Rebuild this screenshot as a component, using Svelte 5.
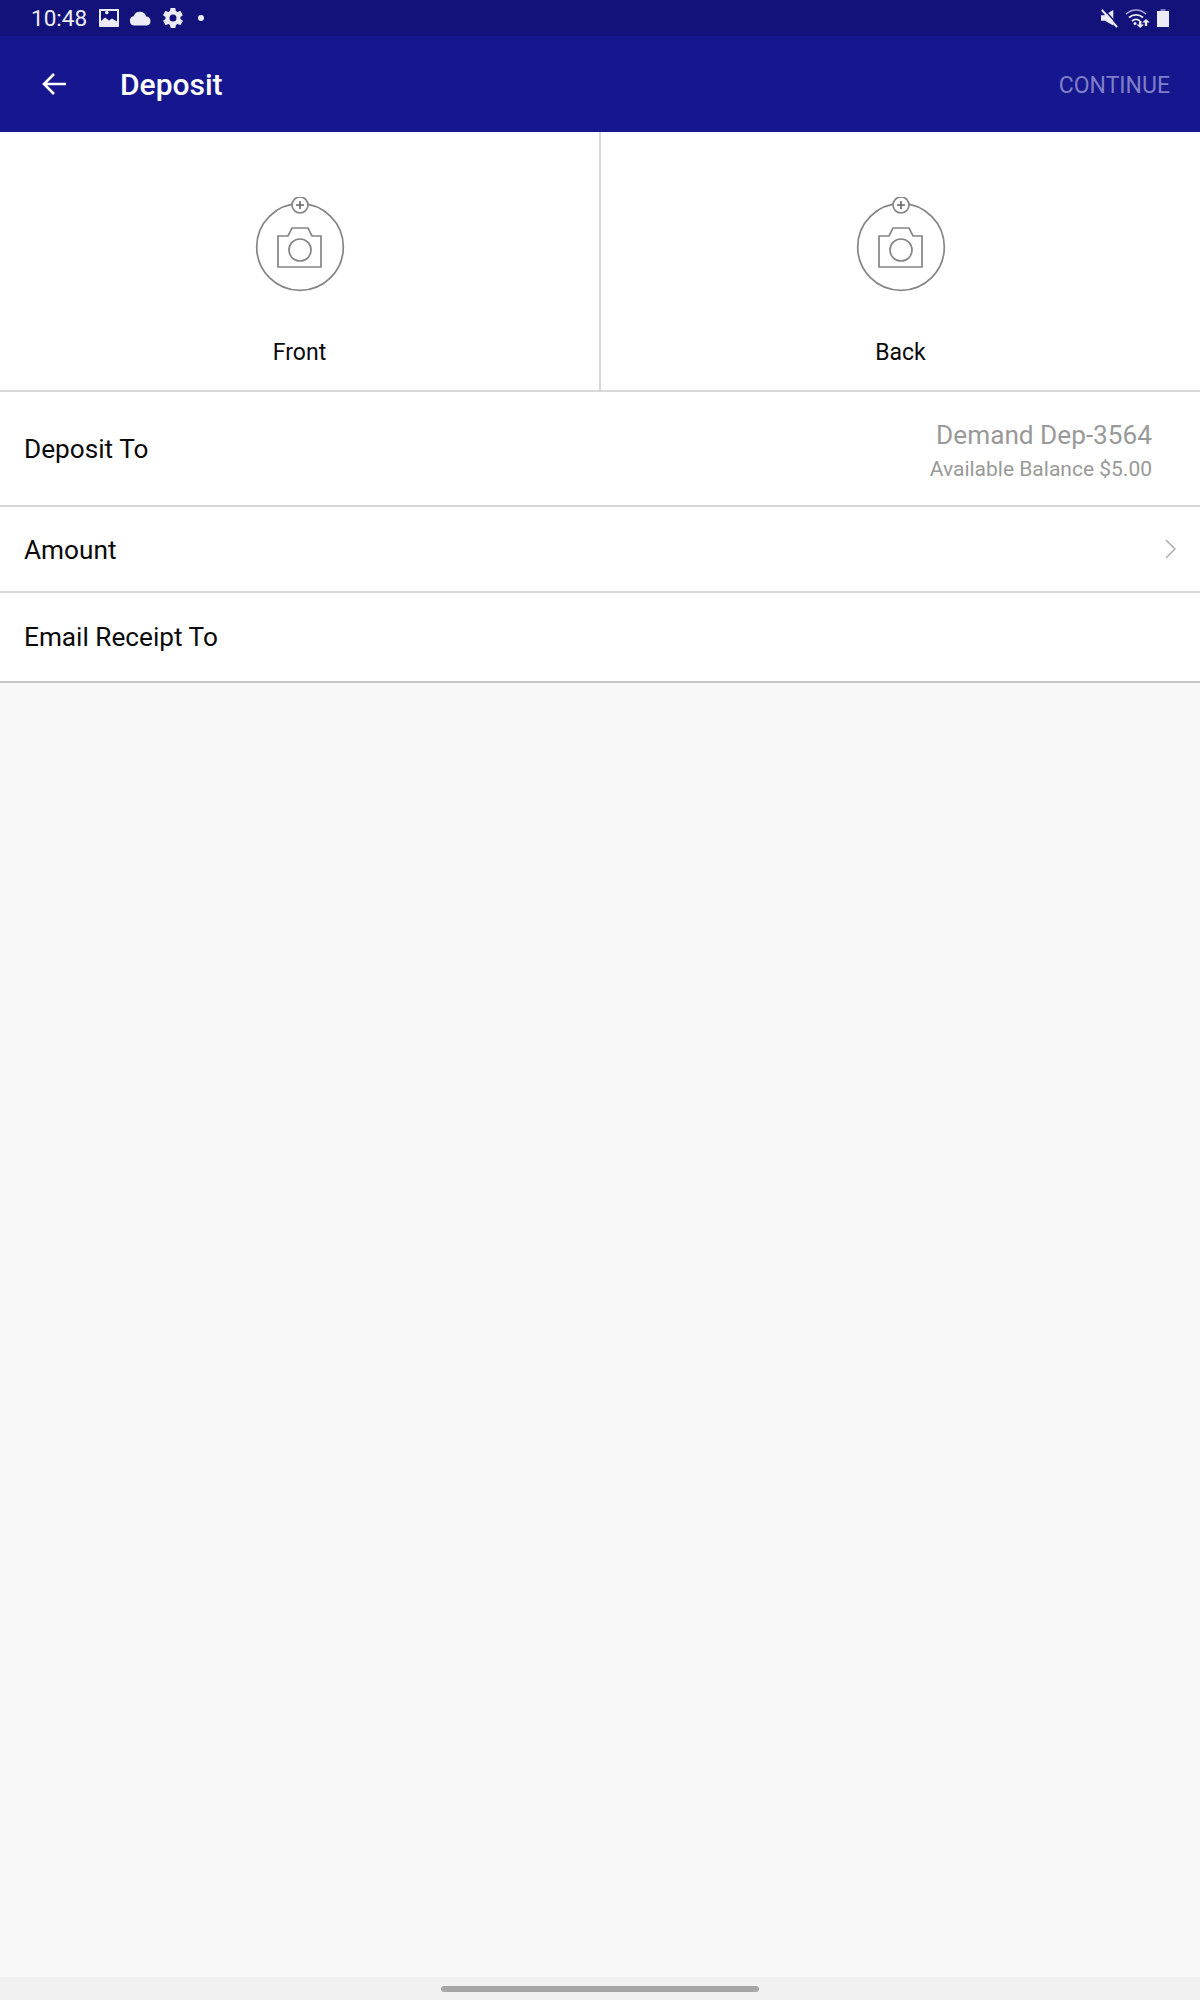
<script lang="ts">
  const captures = ['Front', 'Back']
</script>

<div class="screen">
  <div class="status">
    <div class="status-left">
      <span class="time">10:48</span>
      <svg class="ico-image" viewBox="0 0 20 18" width="20" height="18">
        <path fill="#ececf6" fill-rule="evenodd" d="M1 0h18a1 1 0 0 1 1 1v16a1 1 0 0 1-1 1H1a1 1 0 0 1-1-1V1a1 1 0 0 1 1-1zM2 2v10l4-3.500 4 3 3-2 5 3V2zM6 3.500a1.800 1.800 0 1 1 0 .01z"/>
      </svg>
      <svg class="ico-cloud" viewBox="0 0 24 16" width="23" height="15">
        <path fill="#ececf6" d="M5.500 15.500a5 5 0 0 1-.8-9.900A7 7 0 0 1 18 5.800a4.900 4.900 0 0 1 .7 9.700z"/>
      </svg>
      <svg class="ico-gear" viewBox="0 0 24 24" width="24" height="24">
        <path fill="#ececf6" fill-rule="evenodd" d="M19.400 13a7.500 7.500 0 0 0 0-2l2.100-1.600a.5.5 0 0 0 .1-.7l-2-3.400a.5.5 0 0 0-.6-.2l-2.500 1a7.600 7.600 0 0 0-1.700-1L14.400 2.400a.5.5 0 0 0-.5-.4h-4a.5.5 0 0 0-.5.4L9 5.100a7.600 7.600 0 0 0-1.700 1l-2.500-1a.5.5 0 0 0-.6.2l-2 3.400a.5.5 0 0 0 .1.700L4.500 11a7.500 7.500 0 0 0 0 2l-2.100 1.600a.5.5 0 0 0-.1.700l2 3.400a.5.5 0 0 0 .6.2l2.500-1a7.600 7.600 0 0 0 1.700 1l.4 2.700a.5.500 0 0 0 .5.400h4a.5.500 0 0 0 .5-.4l.4-2.700a7.600 7.600 0 0 0 1.700-1l2.500 1a.5.500 0 0 0 .6-.2l2-3.400a.5.500 0 0 0-.1-.7zM12 15.500a3.500 3.500 0 1 1 0-7 3.500 3.500 0 0 1 0 7z"/>
      </svg>
      <span class="dot"></span>
    </div>
    <div class="status-right">
      <svg viewBox="0 0 18 20" width="17" height="19">
        <path fill="#ececf6" d="M0 6.500h3.500L13 1v16.500l-9-5H0z"/>
        <path stroke="#ececf6" stroke-width="2.200" d="M1 1l16 18"/>
        <path stroke="#12127a" stroke-width="1.500" d="M3.200 .2l15 17"/>
      </svg>
      <svg viewBox="0 0 25 20" width="25" height="20" fill="none">
        <path stroke="#a9a9d6" stroke-width="1.500" d="M1 6c6-5.500 14-5.500 20 0"/>
        <path stroke="#ececf6" stroke-width="1.800" d="M4 9.500c4-3.500 10-3.500 14 0M7 13c2.500-2 5.500-2 8 0"/>
        <circle cx="10" cy="15.500" r="1.500" fill="#ececf6"/>
        <path fill="#ececf6" d="M14 13h2.400v3.500H19L15.200 20l-3.800-3.500H14zM21 11l3.800 3.500h-2.600V18h-2.400v-3.500h-2.600z"/>
      </svg>
      <svg viewBox="0 0 12 18" width="12" height="18">
        <path fill="#7a7ac0" d="M3.500 0h5v2h-5z"/>
        <path fill="#ececf6" d="M0 2h12v16H0z"/>
      </svg>
    </div>
  </div>

  <div class="toolbar">
    <svg class="back" viewBox="0 0 26 24" width="26" height="24" fill="none" stroke="#fff" stroke-width="2.600">
      <path d="M25 12H3M13 2L3 12l10 10"/>
    </svg>
    <span class="title">Deposit</span>
    <span class="action">CONTINUE</span>
  </div>

  <div class="captures">
    {#each captures as label}
      <div class="capture">
        <svg class="camera" viewBox="0 0 90 96" width="90" height="96" fill="none" stroke="#858585" stroke-width="1.700">
          <circle cx="45" cy="50" r="43.300"/>
          <circle cx="45" cy="8" r="8" fill="#fff"/>
          <path d="M41 8h8M45 4v8" stroke="#666" stroke-width="1.600"/>
          <path d="M23 39h10l4-8h16l4 8h9v31H23z"/>
          <circle cx="45" cy="53" r="11"/>
        </svg>
        <span>{label}</span>
      </div>
    {/each}
  </div>

  <div class="row deposit-to">
    <span>Deposit To</span>
    <div class="account">
      <div class="account-name">Demand Dep-3564</div>
      <div class="account-balance">Available Balance $5.00</div>
    </div>
  </div>
  <div class="row amount">
    <span class="amount-label">Amount</span>
    <svg viewBox="0 0 11 20" width="11" height="20" fill="none" stroke="#adadad" stroke-width="1.500">
      <path d="M1 1l9 9-9 9"/>
    </svg>
  </div>
  <div class="row email">
    <span>Email Receipt To</span>
  </div>

  <div class="fill"></div>
  <div class="navbar"><div class="pill"></div></div>
</div>

<style>
  :global(body) { margin: 0; }
  .screen {
    width: 1200px;
    height: 2000px;
    display: flex;
    flex-direction: column;
    background: #f8f8f8;
    font-family: Roboto, "Liberation Sans", sans-serif;
    color: #0a0a0a;
  }
  .status {
    height: 36px;
    flex: none;
    background: #12127a;
    display: flex;
    align-items: center;
    justify-content: space-between;
    padding: 0 31px 0 31px;
    color: #ececf6;
  }
  .status-left, .status-right { display: flex; align-items: center; }
  .time { font-size: 22.500px; margin-right: 12px; }
  .ico-image { margin-right: 10px; }
  .ico-cloud { margin-right: 9px; }
  .ico-gear { margin-right: 13px; }
  .dot { width: 6px; height: 6px; border-radius: 50%; background: #ececf6; }
  .status-right { gap: 7px; }
  .toolbar {
    height: 96px;
    flex: none;
    background: #16168f;
    display: flex;
    align-items: center;
    padding: 0 30px 0 41px;
    color: #fff;
  }
  .back { margin-right: 53px; }
  .title { font-size: 30px; font-weight: 500; flex: 1; }
  .action { font-size: 23px; color: #7f7fc8; padding-top: 2px; }
  .captures {
    height: 258px;
    flex: none;
    display: flex;
    background: #fff;
    border-bottom: 2px solid #d8d8d8;
  }
  .capture {
    flex: 1;
    display: flex;
    flex-direction: column;
    align-items: center;
    padding-top: 65px;
    font-size: 23px;
  }
  .capture + .capture { border-left: 2px solid #d8d8d8; }
  .camera { margin-bottom: 46px; }
  .row {
    flex: none;
    display: flex;
    align-items: center;
    justify-content: space-between;
    box-sizing: border-box;
    padding: 0 24px;
    background: #fff;
    border-bottom: 2px solid #d8d8d8;
    font-size: 26.200px;
  }
  .deposit-to { height: 115px; }
  .amount { height: 86px; }
  .amount-label { padding-top: 2px; }
  .email { height: 90px; border-bottom-color: #c6c6c6; }
  .account { text-align: right; margin-right: 24px; padding-top: 6px; }
  .account-name { font-size: 26.200px; color: #999; line-height: 34px; }
  .account-balance { font-size: 21px; color: #999; line-height: 31px; margin-top: 2px; }
  .fill { flex: 1; }
  .navbar {
    height: 23px;
    flex: none;
    background: #f1f1f1;
    display: flex;
    justify-content: center;
    padding-top: 9px;
    box-sizing: border-box;
  }
  .pill { width: 318px; height: 6px; border-radius: 3px; background: #a6a6a6; }
</style>
